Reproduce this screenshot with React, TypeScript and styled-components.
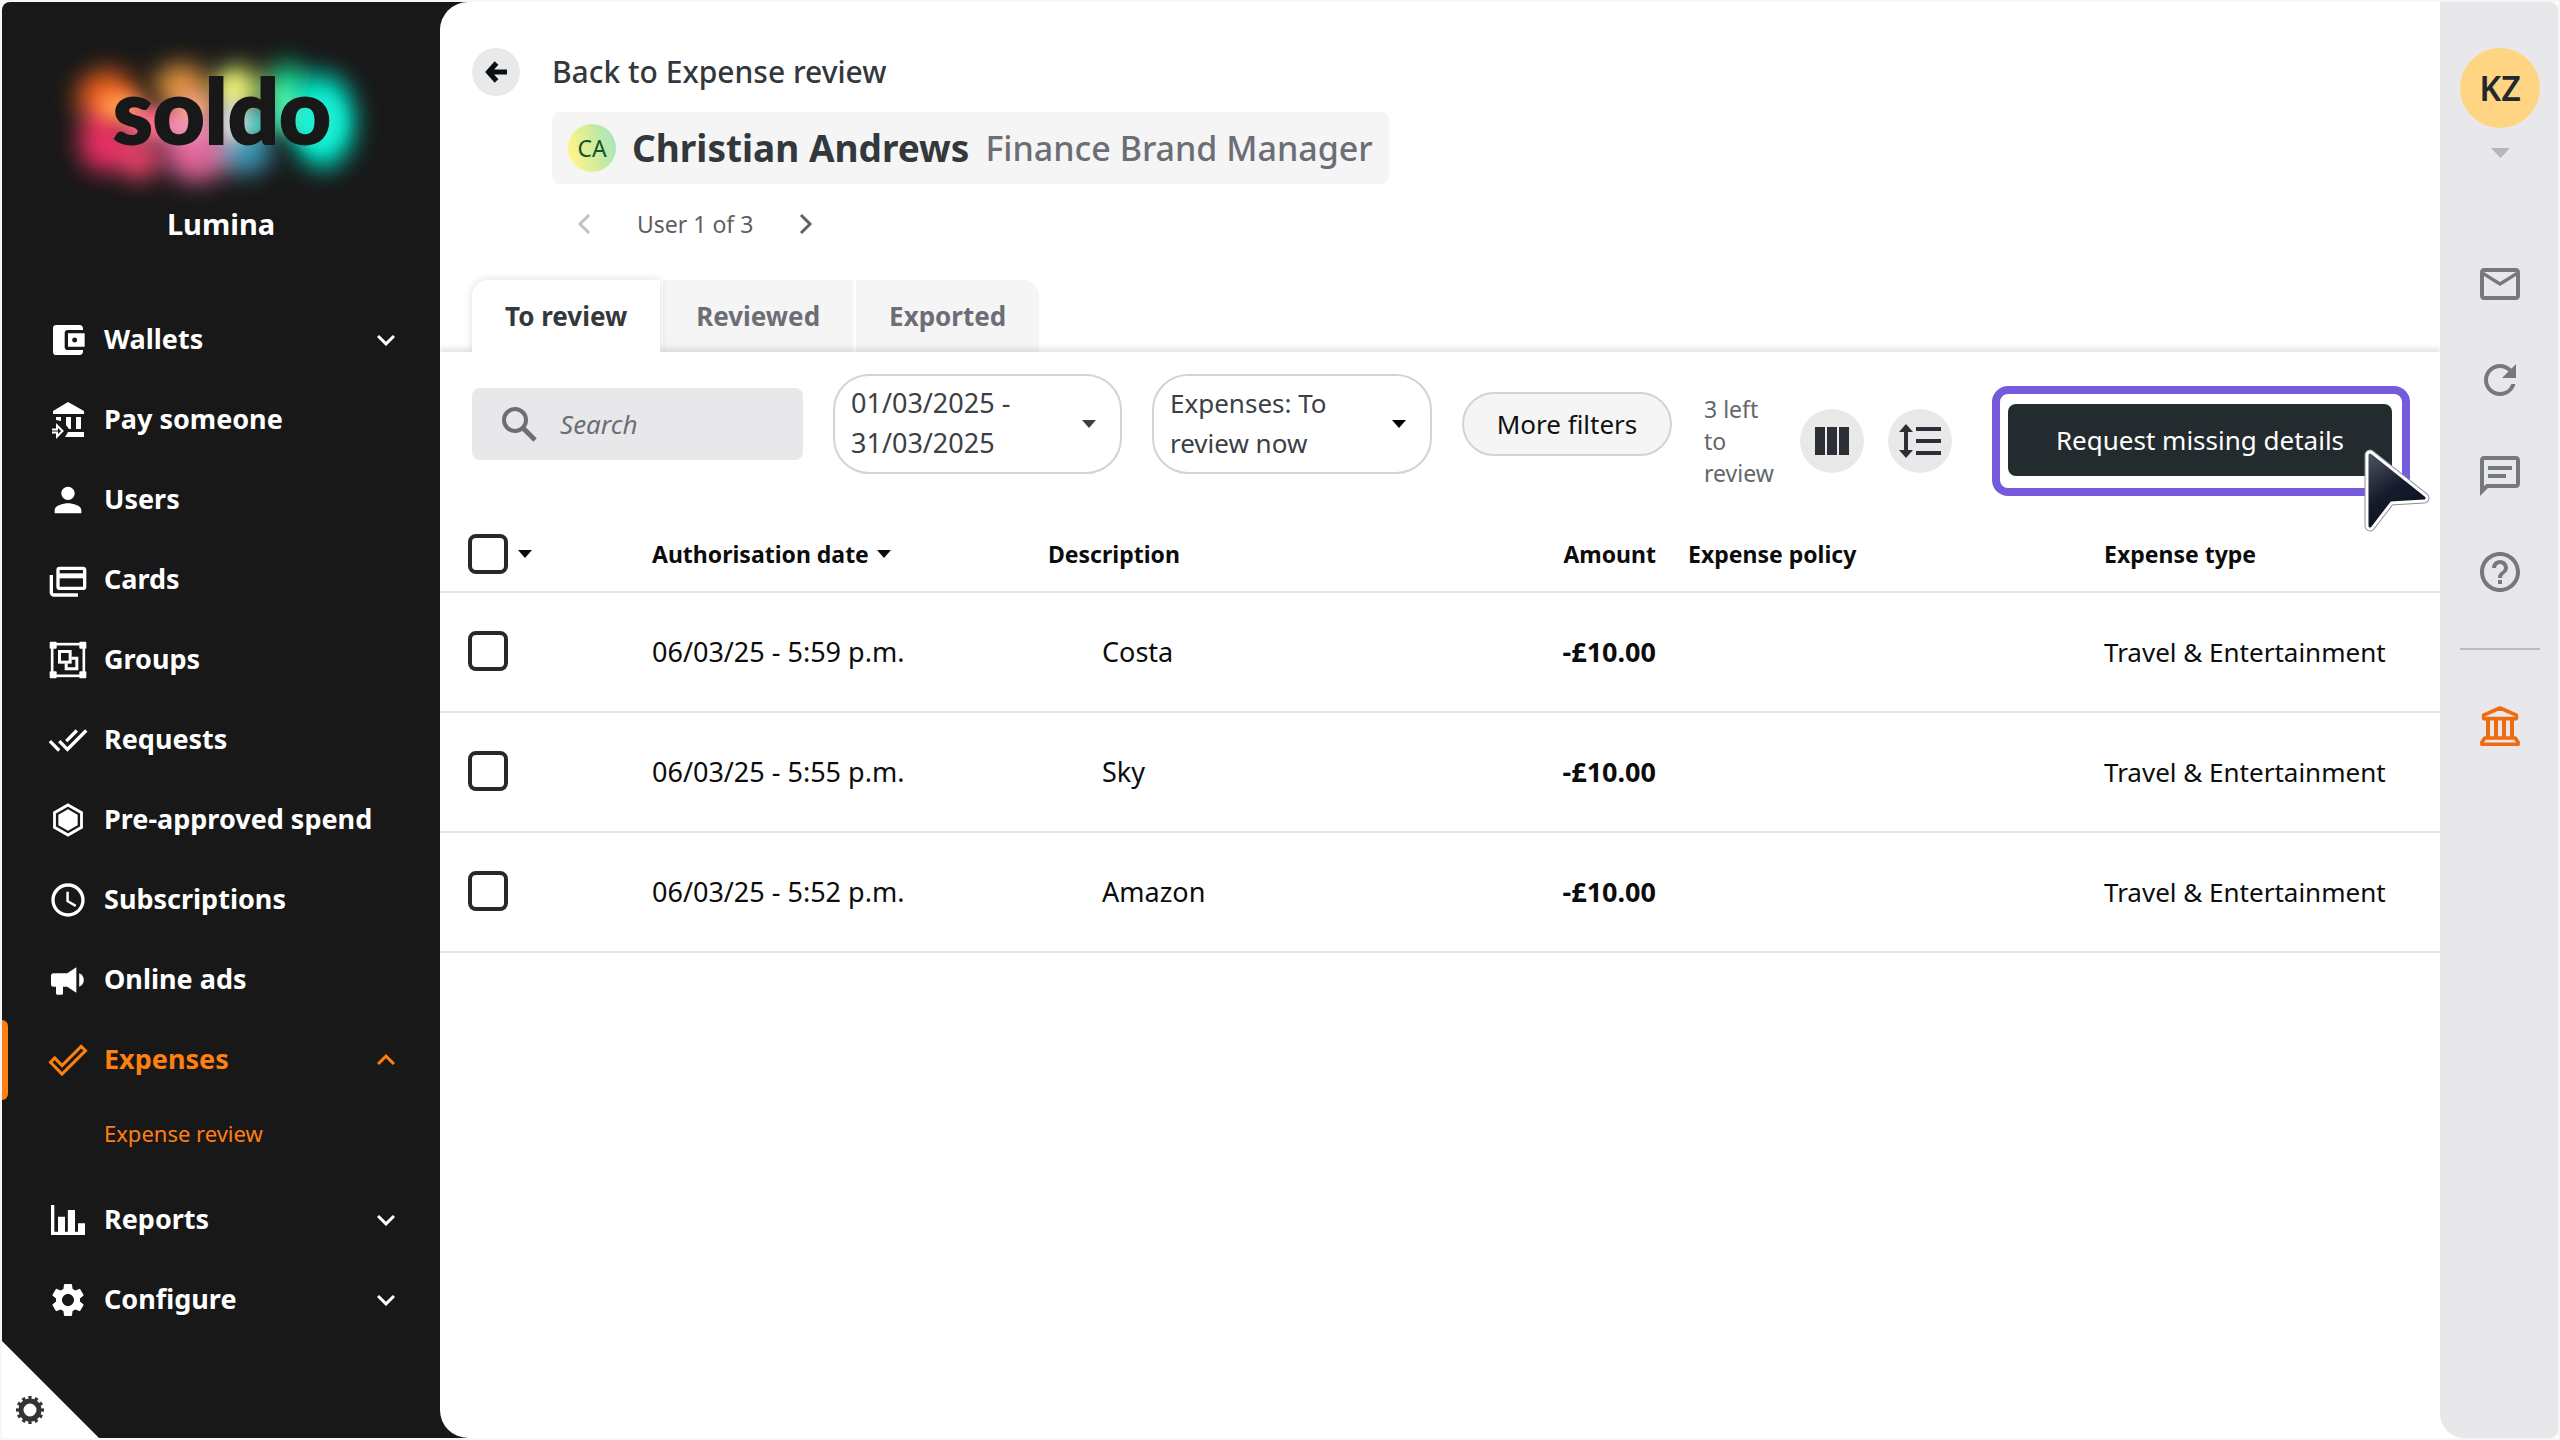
import React from "react";
import styled, { createGlobalStyle } from "styled-components";
import {
  MdAccountBalanceWallet,
  MdPerson,
  MdDoneAll,
  MdAccessTime,
  MdSettings,
  MdMailOutline,
  MdRefresh,
  MdHelpOutline,
  MdExpandMore,
  MdExpandLess,
} from "react-icons/md";

const ink = "#181818";
const slate = "#33383d";
const muted = "#6b6f75";
const orange = "#ff7f11";

const GlobalStyle = createGlobalStyle`
  * { box-sizing: border-box; }
  body { margin: 0; background: #f5f6f7; }
  body, button, input, select { font-family: "Noto Sans", "Open Sans", sans-serif; }
  button { border: 0; padding: 0; background: none; color: inherit; cursor: pointer; }
  a { color: inherit; text-decoration: none; }
`;

/* ---------- shell ---------- */

const Shell = styled.div`
  display: flex;
  min-height: 100vh;
  padding: 2px;
`;

const Sidebar = styled.aside`
  position: relative;
  flex: 0 0 466px;
  margin-right: -28px;
  padding-right: 28px;
  background: ${ink};
  color: #fff;
  border-radius: 8px 0 0 8px;
`;

const Main = styled.main`
  position: relative;
  z-index: 1;
  flex: 1;
  min-width: 0;
  padding-top: 46px;
  background: #fff;
  border-radius: 28px 0 0 28px;
`;

const RailBacking = styled.div`
  flex: 0 0 118px;
  background: #fff;
`;

const Rail = styled.aside`
  display: flex;
  flex-direction: column;
  align-items: center;
  height: 100%;
  padding: 46px 0 0 2px;
  background: #e8e8ea;
  border-radius: 0 8px 8px 24px;
  color: ${muted};
`;

/* ---------- sidebar ---------- */

const Brand = styled.div`
  display: flex;
  flex-direction: column;
  align-items: center;
  height: 298px;
  padding-top: 18px;

  svg { display: block; }
`;

const Company = styled.div`
  margin-top: -6px;
  font-size: 29px;
  line-height: 40px;
  font-weight: 700;
`;

const Menu = styled.ul`
  list-style: none;
  margin: 0;
  padding: 0;
`;

const MenuLink = styled.a<{ $active?: boolean }>`
  position: relative;
  display: flex;
  align-items: center;
  gap: 16px;
  height: 80px;
  padding: 0 36px 0 46px;
  font-size: 27px;
  line-height: 36px;
  font-weight: 700;
  color: ${(p) => (p.$active ? orange : "#fff")};

  &::before {
    content: "";
    display: ${(p) => (p.$active ? "block" : "none")};
    position: absolute;
    inset: 0 auto 0 0;
    width: 6px;
    border-radius: 0 6px 6px 0;
    background: ${orange};
  }

  svg { flex: none; }
  span { flex: 1; padding-bottom: 2px; white-space: nowrap; }
`;

const SubLink = styled.a`
  display: block;
  height: 80px;
  padding-left: 102px;
  font-size: 22px;
  line-height: 66px;
  color: ${orange};
`;

const CornerButton = styled.button`
  position: absolute;
  left: 0;
  bottom: 0;
  display: flex;
  align-items: flex-end;
  width: 97px;
  height: 97px;
  padding: 0 0 14px 14px;
  background: #fff;
  clip-path: polygon(0 0, 100% 100%, 0 100%);
`;

/* ---------- heading ---------- */

const BackRow = styled.div`
  display: flex;
  align-items: center;
  gap: 32px;
  padding-left: 32px;
`;

const BackButton = styled.button`
  display: grid;
  place-items: center;
  width: 48px;
  height: 48px;
  border-radius: 50%;
  background: #e8e9eb;
`;

const BackLabel = styled.span`
  font-size: 30px;
  line-height: 48px;
  font-weight: 500;
  color: ${slate};
`;

const PersonCard = styled.header`
  display: flex;
  align-items: center;
  gap: 16px;
  width: fit-content;
  height: 72px;
  margin: 16px 0 0 112px;
  padding: 0 16px;
  border-radius: 8px;
  background: #f5f5f5;
`;

const Initials = styled.span`
  display: grid;
  place-items: center;
  width: 48px;
  height: 48px;
  border-radius: 50%;
  background: linear-gradient(75deg, #fdf48c 15%, #c9eba0 60%, #a6e3c4 95%);
  color: #14532d;
  font-size: 23px;
`;

const PersonName = styled.h1`
  margin: 0;
  font-size: 37px;
  line-height: 48px;
  font-weight: 700;
  color: ${slate};
`;

const PersonRole = styled.span`
  font-size: 34px;
  line-height: 48px;
  font-weight: 500;
  color: ${muted};
`;

const Pager = styled.div`
  display: flex;
  align-items: center;
  gap: 37px;
  height: 48px;
  margin: 16px 0 0 128px;
  font-size: 23px;
  color: #5c6065;
`;

const PagerButton = styled.button`
  display: grid;
  place-items: center;
  width: 32px;
  height: 32px;
  color: #5f6368;

  &:disabled { color: #bfc1c3; }
`;

/* ---------- tabs ---------- */

const Tabs = styled.div`
  display: flex;
  gap: 3px;
  margin-top: 32px;
  padding-left: 32px;
`;

const Tab = styled.button<{ $active?: boolean }>`
  position: relative;
  z-index: ${(p) => (p.$active ? 2 : 0)};
  height: 72px;
  padding: 0 33px;
  font-size: 26px;
  font-weight: 700;
  color: ${(p) => (p.$active ? slate : muted)};
  background: ${(p) => (p.$active ? "#fff" : "#f5f5f5")};
  box-shadow: ${(p) => (p.$active ? "0 0 10px rgba(0, 0, 0, 0.14)" : "none")};
  clip-path: inset(-12px -8px 0 -12px);

  &:first-child { border-top-left-radius: 16px; }
  &:last-child { border-top-right-radius: 16px; }
`;

const Panel = styled.section`
  position: relative;
  z-index: 1;
  background: #fff;
  box-shadow: 0 -3px 6px rgba(0, 0, 0, 0.12);
  clip-path: inset(-12px 0 0 0);
`;

/* ---------- toolbar ---------- */

const Toolbar = styled.div`
  display: flex;
  align-items: flex-start;
  gap: 30px;
  padding: 22px 30px 20px 32px;
`;

const Filters = styled.div`
  flex: 1;
  display: flex;
  align-items: center;
  gap: 30px;
`;

const Actions = styled.div`
  display: flex;
  align-items: center;
  gap: 24px;
  margin-top: 12px;
`;

const SearchBox = styled.label`
  display: flex;
  flex: 1;
  align-items: center;
  gap: 22px;
  height: 72px;
  min-width: 0;
  padding: 0 28px;
  border-radius: 8px;
  background: #e8e8ea;
  color: ${muted};

  svg { flex: none; }
`;

const SearchInput = styled.input`
  flex: 1;
  min-width: 0;
  width: 0;
  border: 0;
  padding: 0;
  background: none;
  font-size: 26px;
  color: ${slate};

  &::placeholder { color: #6b6f75; font-style: italic; opacity: 1; }
`;

const pill = `
  border: 2px solid #d2d3d4;
  background: #fff;
  font-size: 26px;
  line-height: 40px;
  color: #3c4045;
`;

const DateButton = styled.button`
  ${pill}
  display: flex;
  align-items: center;
  justify-content: space-between;
  width: 289px;
  height: 100px;
  padding: 0 24px 0 16px;
  border-radius: 36px;
  font-size: 27px;
  text-align: left;

  span { width: 180px; padding-bottom: 2px; }
`;

const SelectWrap = styled.label`
  position: relative;
  display: block;

  svg { position: absolute; right: 26px; top: 46px; pointer-events: none; }
`;

const StatusSelect = styled.select`
  ${pill}
  appearance: none;
  display: block;
  width: 280px;
  height: 100px;
  padding: 0 64px 2px 16px;
  border-radius: 36px;
  white-space: normal;
`;

const MoreButton = styled.button`
  ${pill}
  width: 210px;
  height: 64px;
  border-radius: 32px;
  background: #f5f5f5;
  line-height: 60px;
  color: #111;
`;

const Remaining = styled.p`
  width: 72px;
  margin: 0 0 0 2px;
  font-size: 23px;
  line-height: 32px;
  color: #63676c;
`;

const RoundButton = styled.button`
  display: grid;
  place-items: center;
  width: 64px;
  height: 64px;
  border-radius: 50%;
  background: #e9e9ea;
  color: #2c3036;
`;

const Highlight = styled.div`
  position: relative;
  margin-left: 16px;
  padding: 10px 10px 12px 8px;
  border: 8px solid #755bdc;
  border-radius: 16px;

  > svg { position: absolute; right: -28px; bottom: -46px; }
`;

const RequestButton = styled.button`
  width: 384px;
  height: 72px;
  border-radius: 8px;
  background: #242b2e;
  color: #fff;
  font-size: 26px;
`;

/* ---------- table ---------- */

const Table = styled.table`
  width: 100%;
  table-layout: fixed;
  border-collapse: collapse;
  text-align: left;
  color: #0c0c0c;
`;

const Col = styled.col<{ $w: string }>`
  width: ${(p) => p.$w};
`;

const Head = styled.th<{ $right?: boolean }>`
  height: 76px;
  padding: ${(p) => (p.$right ? "0 12px 0 0" : "0 0 0 20px")};
  border-bottom: 2px solid #e4e5e6;
  text-align: ${(p) => (p.$right ? "right" : "left")};
  font-size: 23px;
  font-weight: 700;
  white-space: nowrap;
`;

const SortButton = styled.button`
  display: flex;
  align-items: center;
  gap: 8px;
  font-size: 23px;
  font-weight: 700;
`;

const Cell = styled.td<{ $indent?: boolean; $right?: boolean }>`
  height: 120px;
  padding: ${(p) => (p.$right ? "0 12px 2px 0" : p.$indent ? "0 0 2px 74px" : "0 0 2px 20px")};
  border-bottom: 2px solid #e4e5e6;
  text-align: ${(p) => (p.$right ? "right" : "left")};
  font-size: 27px;
  font-weight: ${(p) => (p.$right ? 700 : 400)};
  white-space: nowrap;
`;

const CheckRow = styled.div`
  display: flex;
  align-items: center;
  gap: 10px;
  padding-left: 8px;
`;

const Checkbox = styled.input`
  appearance: none;
  width: 40px;
  height: 40px;
  margin: 0;
  border: 4px solid #26292c;
  border-radius: 8px;
  background: #fff;

  &:checked { background: #26292c; }
`;

const TypeName = styled.span`
  font-size: 26px;
`;

/* ---------- rail ---------- */

const ProfileButton = styled.button`
  display: flex;
  flex-direction: column;
  align-items: center;
  gap: 20px;
  height: 188px;
  color: #b4b6b9;
`;

const ProfileBadge = styled.span`
  display: grid;
  place-items: center;
  width: 80px;
  height: 80px;
  border-radius: 50%;
  background: #ffd584;
  color: #23282b;
  font-size: 34px;
  font-weight: 600;
`;

const RailButton = styled.button<{ $accent?: boolean }>`
  display: grid;
  place-items: center;
  width: 80px;
  height: 96px;
  color: ${(p) => (p.$accent ? "#f06a10" : "#75787c")};
`;

const Rule = styled.hr`
  width: 80px;
  height: 2px;
  margin: 28px 0;
  border: 0;
  background: #b9bbbe;
`;

/* ---------- drawings ---------- */

const Logo = () => (
  <svg width="340" height="190" viewBox="50 20 340 190" role="img" aria-label="soldo">
    <defs>
      <filter id="glow" x="-60%" y="-60%" width="220%" height="220%">
        <feGaussianBlur stdDeviation="12" />
      </filter>
      <filter id="soft" x="-60%" y="-60%" width="220%" height="220%">
        <feGaussianBlur stdDeviation="8" />
      </filter>
    </defs>
    <g filter="url(#glow)">
      <ellipse cx="106" cy="98" rx="30" ry="28" fill="#f0601c" />
      <ellipse cx="102" cy="142" rx="24" ry="30" fill="#ea2f63" />
      <ellipse cx="138" cy="158" rx="20" ry="22" fill="#f0446f" />
      <ellipse cx="180" cy="86" rx="26" ry="22" fill="#e8963c" />
      <ellipse cx="196" cy="150" rx="32" ry="32" fill="#e2659a" />
      <ellipse cx="236" cy="90" rx="22" ry="24" fill="#d8e868" />
      <ellipse cx="286" cy="94" rx="24" ry="32" fill="#12c480" />
      <ellipse cx="244" cy="150" rx="26" ry="24" fill="#3c9cba" />
      <ellipse cx="322" cy="121" rx="32" ry="48" fill="#06dcc0" />
    </g>
    <g filter="url(#soft)">
      <ellipse cx="120" cy="106" rx="22" ry="14" fill="#ff9a4c" />
      <ellipse cx="150" cy="124" rx="28" ry="18" fill="#ff6a85" />
      <ellipse cx="192" cy="106" rx="20" ry="16" fill="#f5a47c" />
      <ellipse cx="186" cy="130" rx="26" ry="14" fill="#f08fb6" />
      <ellipse cx="231" cy="90" rx="10" ry="14" fill="#eef07a" />
      <ellipse cx="231" cy="122" rx="14" ry="22" fill="#e0e2e0" />
      <ellipse cx="256" cy="124" rx="14" ry="16" fill="#4cc8c4" />
      <ellipse cx="284" cy="108" rx="10" ry="26" fill="#52f0a8" />
      <ellipse cx="318" cy="122" rx="24" ry="28" fill="#1cf0d4" />
    </g>
    <text
      x="221"
      y="144"
      textAnchor="middle"
      fontFamily="Lato, sans-serif"
      fontWeight="900"
      fontSize="90"
      fill={ink}
      stroke={ink}
      strokeWidth="2"
    >
      soldo
    </text>
  </svg>
);

const PayIcon = () => (
  <svg width="40" height="40" viewBox="0 0 40 40" fill="currentColor">
    <path d="M20 2l16 9v3H5v-3zM8 17h5v4l-5-1zM18 17h5v12h-2l-3-4zM28 17h5v12h-5zM20 32h16v5H17z" />
    <path d="M4 29.500h5v-4l5.500 5.500-5.500 5.500v-4H4" fill="none" stroke="currentColor" strokeWidth="2" />
  </svg>
);

const CardsIcon = () => (
  <svg width="40" height="40" viewBox="0 0 24 24" fill="none" stroke="currentColor" strokeWidth="2">
    <rect x="6" y="5" width="16" height="12" rx="1" />
    <path d="M6 9.500h16" strokeWidth="3" />
    <path d="M2 9v10.500a1.500 1.500 0 0 0 1.500 1.500H18" />
  </svg>
);

const GroupsIcon = () => (
  <svg width="40" height="40" viewBox="0 0 24 24" fill="none" stroke="currentColor">
    <rect x="2.500" y="2.500" width="19" height="19" strokeWidth="1.600" />
    <g fill="currentColor" stroke="none">
      <rect x="1" y="1" width="4.200" height="4.200" rx=".6" />
      <rect x="18.800" y="1" width="4.200" height="4.200" rx=".6" />
      <rect x="1" y="18.800" width="4.200" height="4.200" rx=".6" />
      <rect x="18.800" y="18.800" width="4.200" height="4.200" rx=".6" />
    </g>
    <rect x="6.900" y="6.900" width="6.400" height="6.400" strokeWidth="1.800" />
    <path d="M14 10.900h3.300v6.400h-6.400V14" strokeWidth="1.800" />
  </svg>
);

const HexIcon = () => (
  <svg width="40" height="40" viewBox="0 0 24 24" fill="none" stroke="currentColor">
    <path d="M12 3l8.100 4.600v8.800L12 21l-8.100-4.600V7.600z" strokeWidth="1.700" />
    <path d="M12 5.600l5.800 3.300v6.200L12 18.400l-5.800-3.300V8.900z" fill="currentColor" stroke="none" />
  </svg>
);

const AdsIcon = () => (
  <svg width="40" height="40" viewBox="0 0 24 24" fill="currentColor">
    <path d="M3.300 8h8.200L17 4.400v15.200L11.500 16H9v4a.9.9 0 0 1-.9.9H5.700a.9.900 0 0 1-.9-.9v-4H3.300A1.500 1.500 0 0 1 1.800 14.500v-5A1.500 1.500 0 0 1 3.300 8z" />
    <path d="M18.700 7.900c1.600.6 2.800 2.200 2.800 4.100s-1.200 3.500-2.800 4.100z" />
  </svg>
);

const ExpensesIcon = () => (
  <svg width="40" height="40" viewBox="0 0 24 24" fill="none" stroke="currentColor" strokeWidth="1.800">
    <path d="M1.500 13.400l2.500-2.600 4.400 4.500L19.900 3.800l2.600 2.600L8.400 20.500z" />
  </svg>
);

const ReportsIcon = () => (
  <svg width="40" height="40" viewBox="0 0 24 24" fill="currentColor">
    <path d="M1.800 3h2v16H6v-9h4.200v9h1.700V6h4.300v13H18v-5h4.200v7H1.800z" />
  </svg>
);

const CogIcon = () => (
  <svg width="28" height="28" viewBox="0 0 28 28" fill="none" stroke="#333">
    <circle cx="14" cy="14" r="9" strokeWidth="5" />
    <circle cx="14" cy="14" r="12" pathLength="48" strokeWidth="4" strokeDasharray="2 2" strokeDashoffset="1" />
  </svg>
);

const BackIcon = () => (
  <svg width="24" height="24" viewBox="0 0 24 24" fill="none" stroke="#0b0f10" strokeWidth="5">
    <path d="M12.500 3l-8 9 8 9M5 12h18" />
  </svg>
);

const Chevron = ({ next }: { next?: boolean }) => (
  <svg width="14" height="22" viewBox="0 0 14 22" fill="none" stroke="currentColor" strokeWidth="3">
    <path d={next ? "M2 2l9 9-9 9" : "M12 2l-9 9 9 9"} />
  </svg>
);

const Caret = ({ wide }: { wide?: boolean }) => (
  <svg width={wide ? 19 : 14} height={wide ? 10 : 8} viewBox="0 0 14 8" preserveAspectRatio="none" fill="currentColor" aria-hidden="true">
    <path d="M0 0h14L7 8z" />
  </svg>
);

const SearchIcon = () => (
  <svg width="38" height="38" viewBox="0 0 38 38" fill="none" stroke="currentColor">
    <circle cx="15" cy="15" r="11" strokeWidth="4" />
    <path d="M23 23l12 12" strokeWidth="5" />
  </svg>
);

const ColumnsIcon = () => (
  <svg width="34" height="28" viewBox="0 0 34 28" fill="currentColor">
    <path d="M0 0h10v28H0zM12 0h10v28H12zM24 0h10v28H24z" />
  </svg>
);

const DensityIcon = () => (
  <svg width="42" height="36" viewBox="0 0 42 36" fill="currentColor">
    <path d="M7 1l7 8H9v18h5l-7 8-7-8h5V9H0zM17 4h25v4H17zM17 16h25v4H17zM17 28h25v4H17z" />
  </svg>
);

const ChatIcon = () => (
  <svg width="48" height="48" viewBox="0 0 24 24" fill="currentColor">
    <path d="M4 4h16v12H5.170L4 17.170V4m0-2c-1.100 0-1.990.9-1.990 2L2 22l4-4h14c1.100 0 2-.9 2-2V4c0-1.100-.9-2-2-2H4zM6 7h12v2H6zM6 11h9v2H6z" />
  </svg>
);

const BankIcon = () => (
  <svg width="48" height="48" viewBox="0 0 24 24" fill="none" stroke="currentColor" strokeLinejoin="round">
    <path d="M12 3l8.200 3.600v1.700H3.800V6.600z" strokeWidth="1.800" />
    <path d="M6 9v8.500M10 9v8.500M14 9v8.500M18 9v8.500" strokeWidth="2" />
    <path d="M4.400 18h15.200l1.500 2.200v.9H2.900v-.9z" strokeWidth="1.800" />
  </svg>
);

const Pointer = () => (
  <svg width="68" height="88" viewBox="0 0 68 88" aria-hidden="true">
    <defs>
      <linearGradient id="pointer" x1="0" y1="0" x2=".5" y2="1">
        <stop offset="0" stopColor="#4a5160" />
        <stop offset=".55" stopColor="#161c2b" />
        <stop offset="1" stopColor="#0c1120" />
      </linearGradient>
    </defs>
    <g strokeLinejoin="round">
      <path d="M8 9l54 43-34 2-20 26z" fill="#8b8f98" stroke="#8b8f98" strokeWidth="11" />
      <path d="M8 9l54 43-34 2-20 26z" fill="#fff" stroke="#fff" strokeWidth="9" />
      <path d="M8 9l54 43-34 2-20 26z" fill="url(#pointer)" stroke="url(#pointer)" strokeWidth="3" />
    </g>
  </svg>
);

/* ---------- data ---------- */

const menu = [
  { label: "Wallets", icon: <MdAccountBalanceWallet size={40} />, more: true },
  { label: "Pay someone", icon: <PayIcon /> },
  { label: "Users", icon: <MdPerson size={40} /> },
  { label: "Cards", icon: <CardsIcon /> },
  { label: "Groups", icon: <GroupsIcon /> },
  { label: "Requests", icon: <MdDoneAll size={40} /> },
  { label: "Pre-approved spend", icon: <HexIcon /> },
  { label: "Subscriptions", icon: <MdAccessTime size={40} /> },
  { label: "Online ads", icon: <AdsIcon /> },
  { label: "Expenses", icon: <ExpensesIcon />, active: true, sub: "Expense review" },
  { label: "Reports", icon: <ReportsIcon />, more: true },
  { label: "Configure", icon: <MdSettings size={40} />, more: true },
];

const expenses = [
  { date: "06/03/25 - 5:59 p.m.", name: "Costa" },
  { date: "06/03/25 - 5:55 p.m.", name: "Sky" },
  { date: "06/03/25 - 5:52 p.m.", name: "Amazon" },
];

export default function App() {
  return (
    <>
      <GlobalStyle />
      <Shell>
        <Sidebar>
          <Brand>
            <Logo />
            <Company>Lumina</Company>
          </Brand>
          <nav>
            <Menu>
              {menu.map((m) => (
                <li key={m.label}>
                  <MenuLink href="#" $active={m.active}>
                    {m.icon}
                    <span>{m.label}</span>
                    {m.more && <MdExpandMore size={36} />}
                    {m.active && <MdExpandLess size={36} />}
                  </MenuLink>
                  {m.sub && <SubLink href="#">{m.sub}</SubLink>}
                </li>
              ))}
            </Menu>
          </nav>
          <CornerButton aria-label="Preferences">
            <CogIcon />
          </CornerButton>
        </Sidebar>

        <Main>
          <BackRow>
            <BackButton aria-label="Back">
              <BackIcon />
            </BackButton>
            <BackLabel>Back to Expense review</BackLabel>
          </BackRow>
          <PersonCard>
            <Initials>CA</Initials>
            <PersonName>Christian Andrews</PersonName>
            <PersonRole>Finance Brand Manager</PersonRole>
          </PersonCard>
          <Pager>
            <PagerButton aria-label="Previous user" disabled>
              <Chevron />
            </PagerButton>
            <span>User 1 of 3</span>
            <PagerButton aria-label="Next user">
              <Chevron next />
            </PagerButton>
          </Pager>

          <Tabs role="tablist">
            <Tab role="tab" aria-selected $active>To review</Tab>
            <Tab role="tab">Reviewed</Tab>
            <Tab role="tab">Exported</Tab>
          </Tabs>

          <Panel>
            <Toolbar>
              <Filters>
                <SearchBox>
                  <SearchIcon />
                  <SearchInput type="search" placeholder="Search" aria-label="Search" />
                </SearchBox>
                <DateButton aria-haspopup="dialog">
                  <span>01/03/2025 - 31/03/2025</span>
                  <Caret />
                </DateButton>
                <SelectWrap>
                  <StatusSelect aria-label="Expenses" defaultValue="now">
                    <option value="now">Expenses: To review now</option>
                  </StatusSelect>
                  <Caret />
                </SelectWrap>
                <MoreButton>More filters</MoreButton>
              </Filters>
              <Actions>
                <Remaining>3 left to review</Remaining>
                <RoundButton aria-label="Columns">
                  <ColumnsIcon />
                </RoundButton>
                <RoundButton aria-label="Row density">
                  <DensityIcon />
                </RoundButton>
                <Highlight>
                  <RequestButton>Request missing details</RequestButton>
                  <Pointer />
                </Highlight>
              </Actions>
            </Toolbar>

            <Table>
              <colgroup>
                <Col $w="9.6%" />
                <Col $w="19.8%" />
                <Col $w="20%" />
                <Col $w="12%" />
                <Col $w="20.8%" />
                <Col $w="17.8%" />
              </colgroup>
              <thead>
                <tr>
                  <Head>
                    <CheckRow>
                      <Checkbox type="checkbox" aria-label="Select all" />
                      <Caret />
                    </CheckRow>
                  </Head>
                  <Head>
                    <SortButton>
                      Authorisation date <Caret />
                    </SortButton>
                  </Head>
                  <Head>Description</Head>
                  <Head $right>Amount</Head>
                  <Head>Expense policy</Head>
                  <Head>Expense type</Head>
                </tr>
              </thead>
              <tbody>
                {expenses.map((e) => (
                  <tr key={e.name}>
                    <Cell>
                      <CheckRow>
                        <Checkbox type="checkbox" aria-label={`Select ${e.name}`} />
                      </CheckRow>
                    </Cell>
                    <Cell>{e.date}</Cell>
                    <Cell $indent>{e.name}</Cell>
                    <Cell $right>-£10.00</Cell>
                    <Cell />
                    <Cell>
                      <TypeName>Travel &amp; Entertainment</TypeName>
                    </Cell>
                  </tr>
                ))}
              </tbody>
            </Table>
          </Panel>
        </Main>

        <RailBacking>
          <Rail>
            <ProfileButton aria-label="Profile">
              <ProfileBadge>KZ</ProfileBadge>
              <Caret wide />
            </ProfileButton>
            <RailButton aria-label="Messages"><MdMailOutline size={48} /></RailButton>
            <RailButton aria-label="Refresh"><MdRefresh size={48} /></RailButton>
            <RailButton aria-label="Chat"><ChatIcon /></RailButton>
            <RailButton aria-label="Help"><MdHelpOutline size={48} /></RailButton>
            <Rule />
            <RailButton aria-label="Bank" $accent><BankIcon /></RailButton>
          </Rail>
        </RailBacking>
      </Shell>
    </>
  );
}
